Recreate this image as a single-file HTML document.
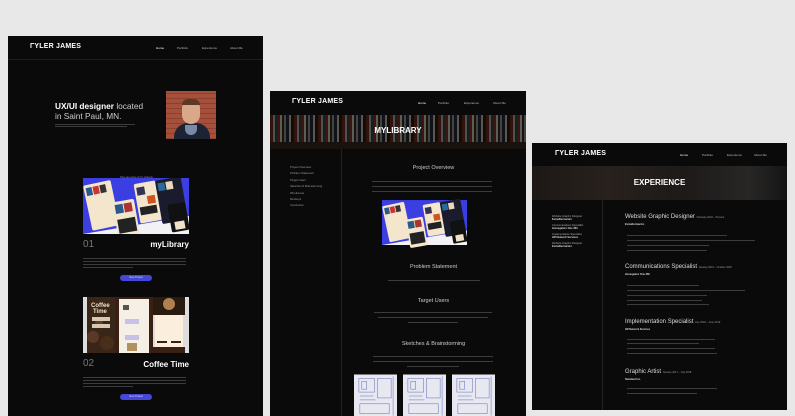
<!DOCTYPE html>
<html><head><meta charset="utf-8"><style>
*{margin:0;padding:0;box-sizing:border-box}
body{width:795px;height:416px;background:#e8e8e8;position:relative;overflow:hidden;font-family:"Liberation Sans",sans-serif;color:#ddd}
.pg{position:absolute;background:#0a0a0a;overflow:hidden}
.a{position:absolute;white-space:nowrap}
.logo{position:absolute;font-weight:bold;color:#fff;font-size:7px;letter-spacing:.2px}
.nav{position:absolute;font-size:3px;color:#bbb}
.hr{position:absolute;height:1px;background:#1e1e1e}
.t{position:absolute;height:1px;background:#3c3c3c!important}
.btn{position:absolute;background:#4447d8;border-radius:4px;height:6px;width:32px;font-size:2.5px;color:#ddd;text-align:center;line-height:6px}
.bn{position:absolute;left:0;width:100%;height:34px;background:repeating-linear-gradient(90deg,#6a2a22 0 3px,#b8b0a4 3px 5px,#2a4a4a 5px 8px,#8a2e26 8px 10px,#d0ccc4 10px 12px,#3a2a1e 12px 14px,#9a9488 14px 16px,#1e2a3a 16px 19px,#c8c0b0 19px 21px,#2a1a12 21px 24px)}
</style></head><body>

<svg width="0" height="0" style="position:absolute">
<defs>
<symbol id="app" viewBox="0 0 106 56">
<rect width="106" height="56" fill="#3b3ee0"/>
<polygon points="0,56 106,38 106,56" fill="#f2f2f6"/>
<g transform="rotate(-12 20 25)"><rect x="4" y="4" width="28" height="46" rx="2" fill="#f4e6cc"/><rect x="6" y="7" width="6" height="8" fill="#2a5a8a"/><rect x="13" y="7" width="6" height="8" fill="#c33"/><rect x="20" y="7" width="6" height="8" fill="#333"/></g>
<g transform="rotate(-10 45 40)"><rect x="32" y="22" width="22" height="36" rx="2" fill="#f4e6cc"/><rect x="34" y="25" width="8" height="9" fill="#2a5a8a"/><rect x="43" y="25" width="8" height="9" fill="#a33"/><rect x="34" y="40" width="18" height="14" fill="#222"/></g>
<g transform="rotate(-10 65 25)"><rect x="54" y="4" width="22" height="40" rx="2" fill="#f4e6cc"/><rect x="56" y="8" width="8" height="8" fill="#335"/><rect x="65" y="18" width="8" height="8" fill="#c52"/><rect x="56" y="28" width="17" height="8" fill="#222"/></g>
<g transform="rotate(-10 90 25)"><rect x="76" y="0" width="26" height="44" rx="2" fill="#1a1c2e"/><rect x="78" y="3" width="7" height="8" fill="#2a6a9a"/><rect x="86" y="3" width="7" height="8" fill="#e9d9bb"/><rect x="84" y="26" width="18" height="28" rx="2" fill="#111"/><rect x="88" y="44" width="10" height="8" fill="#efe2c6"/></g>
</symbol>
<symbol id="coffee" viewBox="0 0 106 56">
<rect width="106" height="56" fill="#ddd"/>
<rect x="4" y="0" width="28" height="56" fill="#3a2618"/>
<circle cx="10" cy="40" r="6" fill="#5a3a24"/><circle cx="24" cy="46" r="7" fill="#4a2e1c"/><circle cx="16" cy="26" r="4" fill="#5e3e26"/>
<text x="8" y="10" font-size="6" font-weight="bold" fill="#f0e0c8" font-family="Liberation Sans">Coffee</text>
<text x="10" y="16" font-size="6" font-weight="bold" fill="#f0e0c8" font-family="Liberation Sans">Time</text>
<rect x="9" y="20" width="18" height="4" fill="#d8c8b0"/><rect x="9" y="27" width="18" height="4" fill="#d8c8b0"/>
<rect x="32" y="0" width="38" height="56" fill="#3a2012"/>
<rect x="36" y="2" width="30" height="54" fill="#f6efe6"/>
<rect x="40" y="8" width="6" height="5" fill="#555"/><rect x="42" y="22" width="14" height="5" fill="#c8c0e8"/><rect x="42" y="38" width="14" height="5" fill="#c8c0e8"/><rect x="44" y="46" width="10" height="8" fill="#b09060"/>
<rect x="70" y="0" width="32" height="18" fill="#2a1a10"/><circle cx="86" cy="7" r="6" fill="#b08050"/>
<rect x="72" y="18" width="28" height="38" fill="#fbeedd"/><rect x="74" y="44" width="10" height="2" fill="#3a2012"/><rect x="88" y="44" width="10" height="2" fill="#3a2012"/>
<rect x="70" y="50" width="32" height="6" fill="#3a2012"/>
</symbol>
<symbol id="sk" viewBox="0 0 44 44">
<rect width="44" height="44" fill="#e8e8f0"/>
<g stroke="#5a6ab8" stroke-width=".5" fill="none"><rect x="5" y="4" width="16" height="14"/><rect x="8" y="7" width="5" height="8"/><rect x="24" y="4" width="14" height="20"/><line x1="6" y1="22" x2="20" y2="22"/><line x1="6" y1="26" x2="22" y2="26"/><rect x="6" y="30" width="30" height="10"/><line x1="40" y1="2" x2="40" y2="42"/></g>
</symbol>
</defs></svg>

<!-- PAGE 1 -->
<div class="pg" style="left:8px;top:36px;width:255px;height:380px">
 <div class="logo" style="left:22px;top:7px">ΓYLER JAMES</div>
 <div class="nav" style="left:148px;top:10px;color:#fff">Home</div>
 <div class="nav" style="left:169px;top:10px">Portfolio</div>
 <div class="nav" style="left:194px;top:10px">Experience</div>
 <div class="nav" style="left:222px;top:10px">About Me</div>
 <div class="hr" style="left:0;top:23px;width:255px"></div>
 <div class="a" style="left:47px;top:65px;font-size:8.3px;line-height:10px;color:#ccc"><b style="color:#fff">UX/UI designer</b> located<br>in Saint Paul, MN.</div>
 <div class="t" style="left:47px;top:88px;width:80px"></div>
 <div class="t" style="left:47px;top:90px;width:72px"></div>
 <div style="position:absolute;left:158px;top:55px;width:50px;height:48px;background:#a5503a;overflow:hidden">
  <div style="position:absolute;inset:0;background:repeating-linear-gradient(0deg,#8e4030 0 1px,transparent 1px 5px)"></div>
  <div style="position:absolute;left:8px;top:32px;width:36px;height:24px;background:#1c2434;border-radius:14px 14px 0 0"></div>
  <div style="position:absolute;left:19px;top:34px;width:12px;height:10px;background:#7a8aa8;border-radius:0 0 6px 6px"></div>
  <div style="position:absolute;left:16px;top:9px;width:18px;height:24px;background:#d9a88a;border-radius:9px 9px 10px 10px"></div>
  <div style="position:absolute;left:16px;top:8px;width:18px;height:6px;background:#5a3a24;border-radius:9px 9px 0 0"></div>
 </div>
 <div class="a" style="left:112px;top:140px;font-size:2.5px;color:#999">Here are some of my projects</div>
 <svg style="position:absolute;left:75px;top:142px" width="106" height="56"><use href="#app"/></svg>
 <div class="a" style="left:75px;top:203px;font-size:10px;color:#777">01</div>
 <div class="a" style="left:139px;top:204px;font-size:8px;font-weight:bold;color:#fff;width:42px;text-align:right">myLibrary</div>
 <div class="t" style="left:75px;top:222px;width:103px"></div>
 <div class="t" style="left:75px;top:225px;width:103px"></div>
 <div class="t" style="left:75px;top:228px;width:103px"></div>
 <div class="t" style="left:75px;top:231px;width:50px"></div>
 <div class="btn" style="left:112px;top:239px">View Project</div>
 <svg style="position:absolute;left:75px;top:261px" width="106" height="56"><use href="#coffee"/></svg>
 <div class="a" style="left:75px;top:322px;font-size:10px;color:#777">02</div>
 <div class="a" style="left:131px;top:324px;font-size:8px;font-weight:bold;color:#fff;width:50px;text-align:right">Coffee Time</div>
 <div class="t" style="left:75px;top:341px;width:103px"></div>
 <div class="t" style="left:75px;top:344px;width:103px"></div>
 <div class="t" style="left:75px;top:347px;width:103px"></div>
 <div class="t" style="left:75px;top:350px;width:50px"></div>
 <div class="btn" style="left:112px;top:358px">View Project</div>
</div>

<!-- PAGE 2 -->
<div class="pg" style="left:270px;top:91px;width:256px;height:325px">
 <div class="logo" style="left:22px;top:7px">ΓYLER JAMES</div>
 <div class="nav" style="left:148px;top:10px;color:#fff">Home</div>
 <div class="nav" style="left:168px;top:10px">Portfolio</div>
 <div class="nav" style="left:194px;top:10px">Experience</div>
 <div class="nav" style="left:223px;top:10px">About Me</div>
 <div class="bn" style="top:24px"></div>
 <div style="position:absolute;left:0;top:24px;width:256px;height:34px;background:rgba(0,0,0,.55)"></div>
 <div style="position:absolute;left:0;top:51px;width:256px;height:7px;background:#1a120c"></div>
 <div class="a" style="left:0;top:35px;width:256px;text-align:center;font-size:8px;font-weight:bold;color:#fff">MYLIBRARY</div>
 <div style="position:absolute;left:71px;top:58px;width:1px;height:270px;background:#222"></div>
 <div class="a" style="left:20px;top:73px;font-size:2.8px;line-height:6.4px;color:#999">Project Overview<br>Problem Statement<br>Target Users<br>Sketches &amp; Brainstorming<br>Wireframes<br>Mockups<br>Conclusion</div>
 <div class="a" style="left:71px;top:74px;width:185px;text-align:center;font-size:5.5px;color:#ccc">Project Overview</div>
 <div class="t" style="left:102px;top:90px;width:120px"></div>
 <div class="t" style="left:102px;top:95px;width:120px"></div>
 <div class="t" style="left:102px;top:100px;width:120px"></div>
 <svg style="position:absolute;left:112px;top:106px" width="85" height="51"><use href="#app"/></svg>
 <div class="a" style="left:71px;top:173px;width:185px;text-align:center;font-size:5.5px;color:#ccc">Problem Statement</div>
 <div class="t" style="left:118px;top:189px;width:92px"></div>
 <div class="a" style="left:71px;top:207px;width:185px;text-align:center;font-size:5.5px;color:#ccc">Target Users</div>
 <div class="t" style="left:104px;top:221px;width:118px"></div>
 <div class="t" style="left:108px;top:226px;width:110px"></div>
 <div class="t" style="left:138px;top:231px;width:50px"></div>
 <div class="a" style="left:71px;top:250px;width:185px;text-align:center;font-size:5.5px;color:#ccc">Sketches &amp; Brainstorming</div>
 <div class="t" style="left:103px;top:265px;width:120px"></div>
 <div class="t" style="left:103px;top:270px;width:120px"></div>
 <div class="t" style="left:137px;top:275px;width:52px"></div>
 <svg style="position:absolute;left:84px;top:283px" width="43" height="44"><use href="#sk"/></svg>
 <svg style="position:absolute;left:133px;top:283px" width="43" height="44"><use href="#sk"/></svg>
 <svg style="position:absolute;left:182px;top:283px" width="43" height="44"><use href="#sk"/></svg>
</div>

<!-- PAGE 3 -->
<div class="pg" style="left:532px;top:143px;width:255px;height:267px">
 <div class="logo" style="left:23px;top:7px">ΓYLER JAMES</div>
 <div class="nav" style="left:148px;top:10px;color:#fff">Home</div>
 <div class="nav" style="left:170px;top:10px">Portfolio</div>
 <div class="nav" style="left:195px;top:10px">Experience</div>
 <div class="nav" style="left:222px;top:10px">About Me</div>
 <div style="position:absolute;left:0;top:23px;width:255px;height:34px;background:linear-gradient(90deg,#2a2420,#3a302a 30%,#2a2624 60%,#3a3836 85%,#1e1e1e)"></div>
 <div style="position:absolute;left:0;top:23px;width:255px;height:34px;background:rgba(0,0,0,.3)"></div>
 <div class="a" style="left:0;top:35px;width:255px;text-align:center;font-size:8px;font-weight:bold;color:#fff">EXPERIENCE</div>
 <div style="position:absolute;left:70px;top:57px;width:1px;height:210px;background:#222"></div>
 <div class="a" style="left:20px;top:72px;font-size:2.6px;line-height:3.2px;color:#aaa">Website Graphic Designer<br><b style="color:#ddd">EvinaDermantro</b></div>
 <div class="a" style="left:20px;top:81px;font-size:2.6px;line-height:3.2px;color:#aaa">Communications Specialist<br><b style="color:#ddd">Homegalerv One 360</b></div>
 <div class="a" style="left:20px;top:90px;font-size:2.6px;line-height:3.2px;color:#aaa">Implementation Specialist<br><b style="color:#ddd">HR Network Services</b></div>
 <div class="a" style="left:20px;top:99px;font-size:2.6px;line-height:3.2px;color:#aaa">Website Graphic Designer<br><b style="color:#ddd">EvinaDermantro</b></div>

 <div class="a" style="left:93px;top:71px;font-size:6px;color:#ddd">Website Graphic Designer <span style="font-size:2.5px;color:#999">February 2022 – Present</span></div>
 <div class="a" style="left:93px;top:80px;font-size:2.5px;font-weight:bold;color:#ddd">EvinaDermantro</div>
 <div class="t" style="left:95px;top:92px;width:100px"></div>
 <div class="t" style="left:95px;top:97px;width:128px"></div>
 <div class="t" style="left:95px;top:102px;width:82px"></div>
 <div class="t" style="left:95px;top:107px;width:80px"></div>

 <div class="a" style="left:93px;top:121px;font-size:6px;color:#ddd">Communications Specialist <span style="font-size:2.5px;color:#999">January 2019 – October 2022</span></div>
 <div class="a" style="left:93px;top:130px;font-size:2.5px;font-weight:bold;color:#ddd">Homegalerv One 360</div>
 <div class="t" style="left:95px;top:142px;width:72px"></div>
 <div class="t" style="left:95px;top:147px;width:118px"></div>
 <div class="t" style="left:95px;top:152px;width:80px"></div>
 <div class="t" style="left:95px;top:157px;width:75px"></div>
 <div class="t" style="left:95px;top:161px;width:82px"></div>

 <div class="a" style="left:93px;top:176px;font-size:6px;color:#ddd">Implementation Specialist <span style="font-size:2.5px;color:#999">July 2018 – June 2019</span></div>
 <div class="a" style="left:93px;top:185px;font-size:2.5px;font-weight:bold;color:#ddd">HR Network Services</div>
 <div class="t" style="left:95px;top:196px;width:88px"></div>
 <div class="t" style="left:95px;top:200px;width:72px"></div>
 <div class="t" style="left:95px;top:205px;width:88px"></div>
 <div class="t" style="left:95px;top:210px;width:90px"></div>

 <div class="a" style="left:93px;top:226px;font-size:6px;color:#ddd">Graphic Artist <span style="font-size:2.5px;color:#999">January 2017 – July 2018</span></div>
 <div class="a" style="left:93px;top:235px;font-size:2.5px;font-weight:bold;color:#ddd">Standard Inc.</div>
 <div class="t" style="left:95px;top:245px;width:90px"></div>
 <div class="t" style="left:95px;top:250px;width:70px"></div>
</div>
</body></html>
